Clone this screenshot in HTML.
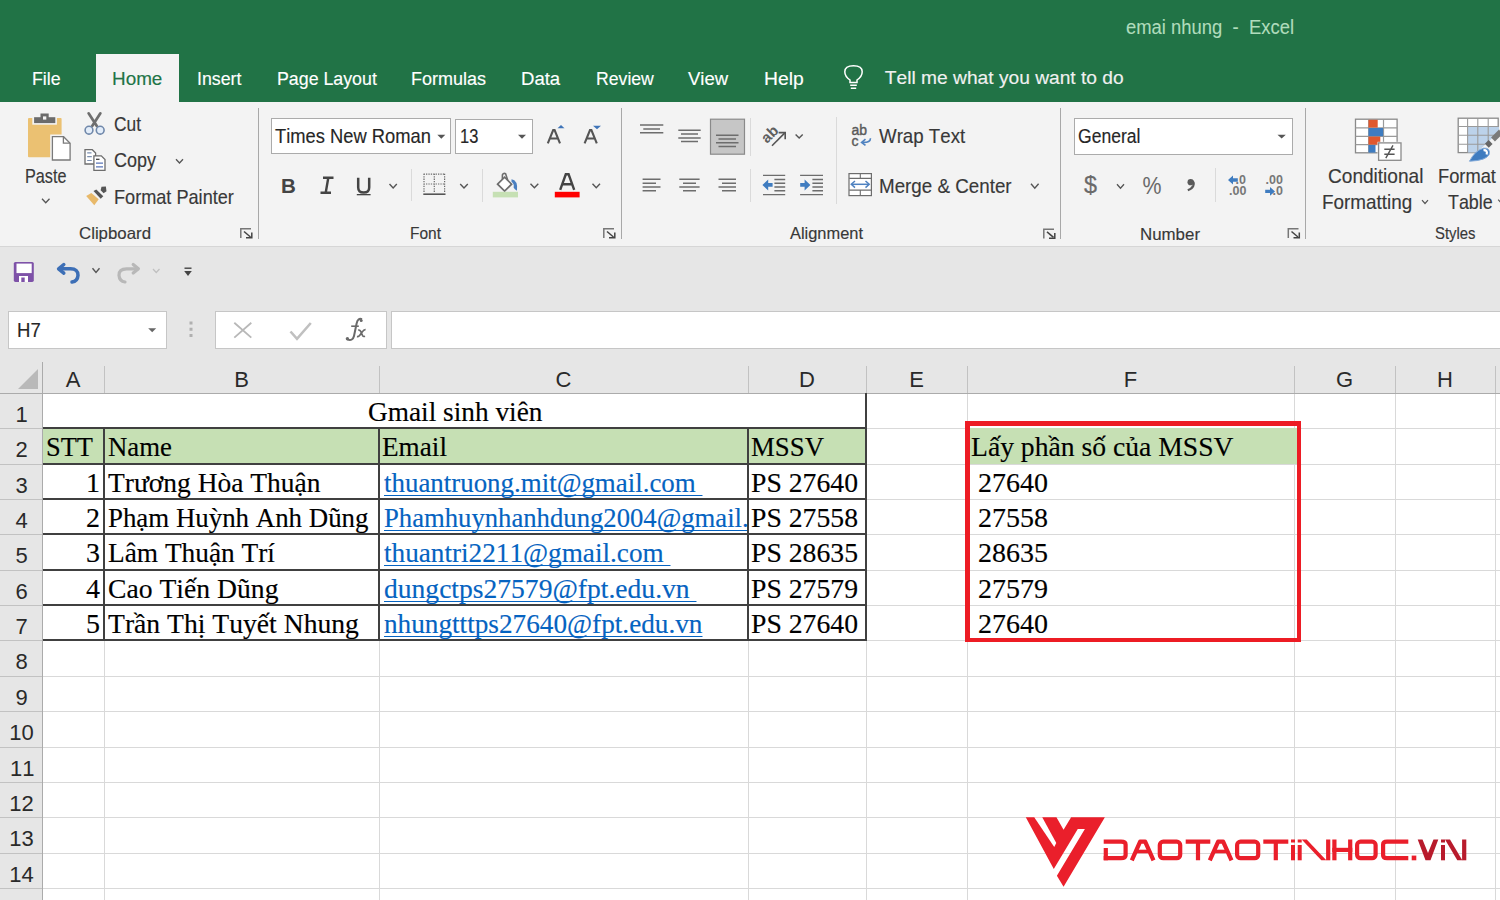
<!DOCTYPE html><html><head><meta charset="utf-8"><style>
html,body{margin:0;padding:0;width:1500px;height:900px;overflow:hidden;background:#fff}
.r{position:absolute;display:block}
.t{position:absolute;white-space:pre;font-kerning:none}
</style></head><body>
<div class="r" style="left:0px;top:0px;width:1500px;height:102px;background:#217346"></div>
<div class="t" style="left:1126.00px;top:17.89px;font-size:19.5px;line-height:19.5px;font-family:'Liberation Sans', sans-serif;color:#b0dcbc;-webkit-text-stroke:0.15px #b0dcbc;transform:scaleX(0.9451);transform-origin:0 0;-webkit-text-stroke:0.1px #b0dcbc">emai nhung  -  Excel</div>
<div class="r" style="left:96px;top:54px;width:83px;height:48px;background:#f3f3f3"></div>
<div class="t" style="left:31.60px;top:68.75px;font-size:19.2px;line-height:19.2px;font-family:'Liberation Sans', sans-serif;color:#ffffff;-webkit-text-stroke:0.15px #ffffff;transform:scaleX(0.9244);transform-origin:0 0;">File</div>
<div class="t" style="left:196.90px;top:68.75px;font-size:19.2px;line-height:19.2px;font-family:'Liberation Sans', sans-serif;color:#ffffff;-webkit-text-stroke:0.15px #ffffff;transform:scaleX(0.9267);transform-origin:0 0;">Insert</div>
<div class="t" style="left:276.70px;top:68.75px;font-size:19.2px;line-height:19.2px;font-family:'Liberation Sans', sans-serif;color:#ffffff;-webkit-text-stroke:0.15px #ffffff;transform:scaleX(0.9265);transform-origin:0 0;">Page Layout</div>
<div class="t" style="left:411.20px;top:68.75px;font-size:19.2px;line-height:19.2px;font-family:'Liberation Sans', sans-serif;color:#ffffff;-webkit-text-stroke:0.15px #ffffff;transform:scaleX(0.9373);transform-origin:0 0;">Formulas</div>
<div class="t" style="left:521.00px;top:68.75px;font-size:19.2px;line-height:19.2px;font-family:'Liberation Sans', sans-serif;color:#ffffff;-webkit-text-stroke:0.15px #ffffff;transform:scaleX(0.9666);transform-origin:0 0;">Data</div>
<div class="t" style="left:595.50px;top:68.75px;font-size:19.2px;line-height:19.2px;font-family:'Liberation Sans', sans-serif;color:#ffffff;-webkit-text-stroke:0.15px #ffffff;transform:scaleX(0.9197);transform-origin:0 0;">Review</div>
<div class="t" style="left:688.40px;top:68.75px;font-size:19.2px;line-height:19.2px;font-family:'Liberation Sans', sans-serif;color:#ffffff;-webkit-text-stroke:0.15px #ffffff;transform:scaleX(0.9644);transform-origin:0 0;">View</div>
<div class="t" style="left:763.50px;top:68.75px;font-size:19.2px;line-height:19.2px;font-family:'Liberation Sans', sans-serif;color:#ffffff;-webkit-text-stroke:0.15px #ffffff;transform:scaleX(1.0054);transform-origin:0 0;">Help</div>
<div class="t" style="left:111.50px;top:68.75px;font-size:19.2px;line-height:19.2px;font-family:'Liberation Sans', sans-serif;color:#217346;-webkit-text-stroke:0.15px #217346;transform:scaleX(0.9841);transform-origin:0 0;">Home</div>
<div class="t" style="left:884.80px;top:68.35px;font-size:19.2px;line-height:19.2px;font-family:'Liberation Sans', sans-serif;color:#f0f0f0;-webkit-text-stroke:0.15px #f0f0f0;">Tell me what you want to do</div>
<div class="r" style="left:0px;top:102px;width:1500px;height:144px;background:#f3f3f3"></div>
<div class="r" style="left:0px;top:246px;width:1500px;height:1px;background:#d6d6d6"></div>
<div class="r" style="left:0px;top:247px;width:1500px;height:115px;background:#e6e6e6"></div>
<div class="t" style="left:114.20px;top:114.54px;font-size:19.8px;line-height:19.8px;font-family:'Liberation Sans', sans-serif;color:#383838;-webkit-text-stroke:0.15px #383838;transform:scaleX(0.8763);transform-origin:0 0;">Cut</div>
<div class="t" style="left:114.20px;top:151.14px;font-size:19.8px;line-height:19.8px;font-family:'Liberation Sans', sans-serif;color:#383838;-webkit-text-stroke:0.15px #383838;transform:scaleX(0.9086);transform-origin:0 0;">Copy</div>
<div class="t" style="left:114.20px;top:187.84px;font-size:19.8px;line-height:19.8px;font-family:'Liberation Sans', sans-serif;color:#383838;-webkit-text-stroke:0.15px #383838;transform:scaleX(0.9164);transform-origin:0 0;">Format Painter</div>
<div class="t" style="left:24.70px;top:167.04px;font-size:19.8px;line-height:19.8px;font-family:'Liberation Sans', sans-serif;color:#383838;-webkit-text-stroke:0.15px #383838;transform:scaleX(0.8196);transform-origin:0 0;">Paste</div>
<div class="t" style="left:79.00px;top:225.33px;font-size:16.5px;line-height:16.5px;font-family:'Liberation Sans', sans-serif;color:#383838;-webkit-text-stroke:0.15px #383838;transform:scaleX(1.0195);transform-origin:0 0;">Clipboard</div>
<div class="t" style="left:410.00px;top:225.33px;font-size:16.5px;line-height:16.5px;font-family:'Liberation Sans', sans-serif;color:#383838;-webkit-text-stroke:0.15px #383838;transform:scaleX(0.9389);transform-origin:0 0;">Font</div>
<div class="t" style="left:790.00px;top:225.33px;font-size:16.5px;line-height:16.5px;font-family:'Liberation Sans', sans-serif;color:#383838;-webkit-text-stroke:0.15px #383838;transform:scaleX(0.9949);transform-origin:0 0;">Alignment</div>
<div class="t" style="left:1140.00px;top:225.63px;font-size:16.5px;line-height:16.5px;font-family:'Liberation Sans', sans-serif;color:#383838;-webkit-text-stroke:0.15px #383838;transform:scaleX(1.0224);transform-origin:0 0;">Number</div>
<div class="t" style="left:1435.00px;top:225.33px;font-size:16.5px;line-height:16.5px;font-family:'Liberation Sans', sans-serif;color:#383838;-webkit-text-stroke:0.15px #383838;transform:scaleX(0.9014);transform-origin:0 0;">Styles</div>
<div class="t" style="left:879.30px;top:127.44px;font-size:19.8px;line-height:19.8px;font-family:'Liberation Sans', sans-serif;color:#383838;-webkit-text-stroke:0.15px #383838;transform:scaleX(0.9445);transform-origin:0 0;">Wrap Text</div>
<div class="t" style="left:879.30px;top:176.74px;font-size:19.8px;line-height:19.8px;font-family:'Liberation Sans', sans-serif;color:#383838;-webkit-text-stroke:0.15px #383838;transform:scaleX(0.9495);transform-origin:0 0;">Merge &amp; Center</div>
<div class="t" style="left:1327.70px;top:167.44px;font-size:19.8px;line-height:19.8px;font-family:'Liberation Sans', sans-serif;color:#383838;-webkit-text-stroke:0.15px #383838;transform:scaleX(0.9640);transform-origin:0 0;">Conditional</div>
<div class="t" style="left:1321.70px;top:192.84px;font-size:19.8px;line-height:19.8px;font-family:'Liberation Sans', sans-serif;color:#383838;-webkit-text-stroke:0.15px #383838;transform:scaleX(0.9542);transform-origin:0 0;">Formatting</div>
<div class="t" style="left:1437.70px;top:167.44px;font-size:19.8px;line-height:19.8px;font-family:'Liberation Sans', sans-serif;color:#383838;-webkit-text-stroke:0.15px #383838;transform:scaleX(0.9249);transform-origin:0 0;">Format</div>
<div class="t" style="left:1448.20px;top:192.84px;font-size:19.8px;line-height:19.8px;font-family:'Liberation Sans', sans-serif;color:#383838;-webkit-text-stroke:0.15px #383838;transform:scaleX(0.9042);transform-origin:0 0;">Table</div>
<div class="r" style="left:258px;top:108px;width:1px;height:131px;background:#a8a8a8"></div>
<div class="r" style="left:621px;top:108px;width:1px;height:131px;background:#a8a8a8"></div>
<div class="r" style="left:1060px;top:108px;width:1px;height:131px;background:#a8a8a8"></div>
<div class="r" style="left:1305px;top:108px;width:1px;height:131px;background:#a8a8a8"></div>
<div class="r" style="left:411px;top:169px;width:1px;height:32px;background:#dadada"></div>
<div class="r" style="left:482px;top:169px;width:1px;height:33px;background:#dadada"></div>
<div class="r" style="left:750px;top:118px;width:1px;height:38px;background:#dadada"></div>
<div class="r" style="left:750px;top:169px;width:1px;height:33px;background:#dadada"></div>
<div class="r" style="left:836px;top:117px;width:1px;height:87px;background:#dadada"></div>
<div class="r" style="left:1215px;top:168px;width:1px;height:34px;background:#dadada"></div>
<div class="r" style="left:271px;top:118px;width:180px;height:36px;background:#fff;border:1px solid #ababab;box-sizing:border-box"></div>
<div class="r" style="left:455px;top:119px;width:78px;height:35px;background:#fff;border:1px solid #ababab;box-sizing:border-box"></div>
<div class="r" style="left:1074px;top:118px;width:219px;height:37px;background:#fff;border:1px solid #ababab;box-sizing:border-box"></div>
<div class="t" style="left:275.20px;top:127.44px;font-size:19.8px;line-height:19.8px;font-family:'Liberation Sans', sans-serif;color:#262626;-webkit-text-stroke:0.15px #262626;transform:scaleX(0.9272);transform-origin:0 0;">Times New Roman</div>
<div class="t" style="left:460.00px;top:127.44px;font-size:19.8px;line-height:19.8px;font-family:'Liberation Sans', sans-serif;color:#262626;-webkit-text-stroke:0.15px #262626;transform:scaleX(0.8309);transform-origin:0 0;">13</div>
<div class="t" style="left:1078.30px;top:127.48px;font-size:19.4px;line-height:19.4px;font-family:'Liberation Sans', sans-serif;color:#262626;-webkit-text-stroke:0.15px #262626;transform:scaleX(0.9056);transform-origin:0 0;">General</div>
<div class="r" style="left:8px;top:311px;width:159px;height:38px;background:#fff;border:1px solid #c6c6c6;box-sizing:border-box"></div>
<div class="t" style="left:17.00px;top:321.44px;font-size:19.8px;line-height:19.8px;font-family:'Liberation Sans', sans-serif;color:#262626;-webkit-text-stroke:0.15px #262626;transform:scaleX(0.9364);transform-origin:0 0;">H7</div>
<div class="r" style="left:215px;top:311px;width:172px;height:38px;background:#fff;border:1px solid #c6c6c6;box-sizing:border-box"></div>
<div class="r" style="left:391px;top:311px;width:1120px;height:38px;background:#fff;border:1px solid #c6c6c6;box-sizing:border-box"></div>
<div class="r" style="left:0px;top:362px;width:1500px;height:32px;background:#e6e6e6"></div>
<div class="r" style="left:0px;top:393px;width:42px;height:507px;background:#e6e6e6"></div>
<div class="r" style="left:42px;top:393px;width:1458px;height:507px;background:#fff"></div>
<div class="r" style="left:0px;top:393px;width:1500px;height:1px;background:#ababab"></div>
<div class="r" style="left:42px;top:362px;width:1px;height:538px;background:#ababab"></div>
<div class="r" style="left:104px;top:366px;width:1px;height:27px;background:#c2c2c2"></div>
<div class="r" style="left:379px;top:366px;width:1px;height:27px;background:#c2c2c2"></div>
<div class="r" style="left:748px;top:366px;width:1px;height:27px;background:#c2c2c2"></div>
<div class="r" style="left:866px;top:366px;width:1px;height:27px;background:#c2c2c2"></div>
<div class="r" style="left:967px;top:366px;width:1px;height:27px;background:#c2c2c2"></div>
<div class="r" style="left:1294px;top:366px;width:1px;height:27px;background:#c2c2c2"></div>
<div class="r" style="left:1395px;top:366px;width:1px;height:27px;background:#c2c2c2"></div>
<div class="r" style="left:1495px;top:366px;width:1px;height:27px;background:#c2c2c2"></div>
<div class="t" style="left:65.66px;top:368.68px;font-size:22px;line-height:22px;font-family:'Liberation Sans', sans-serif;color:#2a2a2a;-webkit-text-stroke:0.15px #2a2a2a;-webkit-text-stroke:0">A</div>
<div class="t" style="left:234.16px;top:368.68px;font-size:22px;line-height:22px;font-family:'Liberation Sans', sans-serif;color:#2a2a2a;-webkit-text-stroke:0.15px #2a2a2a;-webkit-text-stroke:0">B</div>
<div class="t" style="left:555.56px;top:368.68px;font-size:22px;line-height:22px;font-family:'Liberation Sans', sans-serif;color:#2a2a2a;-webkit-text-stroke:0.15px #2a2a2a;-webkit-text-stroke:0">C</div>
<div class="t" style="left:799.06px;top:368.68px;font-size:22px;line-height:22px;font-family:'Liberation Sans', sans-serif;color:#2a2a2a;-webkit-text-stroke:0.15px #2a2a2a;-webkit-text-stroke:0">D</div>
<div class="t" style="left:909.16px;top:368.68px;font-size:22px;line-height:22px;font-family:'Liberation Sans', sans-serif;color:#2a2a2a;-webkit-text-stroke:0.15px #2a2a2a;-webkit-text-stroke:0">E</div>
<div class="t" style="left:1123.78px;top:368.68px;font-size:22px;line-height:22px;font-family:'Liberation Sans', sans-serif;color:#2a2a2a;-webkit-text-stroke:0.15px #2a2a2a;-webkit-text-stroke:0">F</div>
<div class="t" style="left:1335.94px;top:368.68px;font-size:22px;line-height:22px;font-family:'Liberation Sans', sans-serif;color:#2a2a2a;-webkit-text-stroke:0.15px #2a2a2a;-webkit-text-stroke:0">G</div>
<div class="t" style="left:1437.06px;top:368.68px;font-size:22px;line-height:22px;font-family:'Liberation Sans', sans-serif;color:#2a2a2a;-webkit-text-stroke:0.15px #2a2a2a;-webkit-text-stroke:0">H</div>
<div class="t" style="left:15.38px;top:404.28px;font-size:22px;line-height:22px;font-family:'Liberation Sans', sans-serif;color:#2a2a2a;-webkit-text-stroke:0.15px #2a2a2a;-webkit-text-stroke:0">1</div>
<div class="r" style="left:0px;top:428px;width:42px;height:1px;background:#c2c2c2"></div>
<div class="t" style="left:15.38px;top:439.28px;font-size:22px;line-height:22px;font-family:'Liberation Sans', sans-serif;color:#2a2a2a;-webkit-text-stroke:0.15px #2a2a2a;-webkit-text-stroke:0">2</div>
<div class="r" style="left:0px;top:464px;width:42px;height:1px;background:#c2c2c2"></div>
<div class="t" style="left:15.38px;top:475.28px;font-size:22px;line-height:22px;font-family:'Liberation Sans', sans-serif;color:#2a2a2a;-webkit-text-stroke:0.15px #2a2a2a;-webkit-text-stroke:0">3</div>
<div class="r" style="left:0px;top:499px;width:42px;height:1px;background:#c2c2c2"></div>
<div class="t" style="left:15.38px;top:510.28px;font-size:22px;line-height:22px;font-family:'Liberation Sans', sans-serif;color:#2a2a2a;-webkit-text-stroke:0.15px #2a2a2a;-webkit-text-stroke:0">4</div>
<div class="r" style="left:0px;top:534px;width:42px;height:1px;background:#c2c2c2"></div>
<div class="t" style="left:15.38px;top:545.28px;font-size:22px;line-height:22px;font-family:'Liberation Sans', sans-serif;color:#2a2a2a;-webkit-text-stroke:0.15px #2a2a2a;-webkit-text-stroke:0">5</div>
<div class="r" style="left:0px;top:570px;width:42px;height:1px;background:#c2c2c2"></div>
<div class="t" style="left:15.38px;top:581.28px;font-size:22px;line-height:22px;font-family:'Liberation Sans', sans-serif;color:#2a2a2a;-webkit-text-stroke:0.15px #2a2a2a;-webkit-text-stroke:0">6</div>
<div class="r" style="left:0px;top:605px;width:42px;height:1px;background:#c2c2c2"></div>
<div class="t" style="left:15.38px;top:616.28px;font-size:22px;line-height:22px;font-family:'Liberation Sans', sans-serif;color:#2a2a2a;-webkit-text-stroke:0.15px #2a2a2a;-webkit-text-stroke:0">7</div>
<div class="r" style="left:0px;top:640px;width:42px;height:1px;background:#c2c2c2"></div>
<div class="t" style="left:15.38px;top:651.28px;font-size:22px;line-height:22px;font-family:'Liberation Sans', sans-serif;color:#2a2a2a;-webkit-text-stroke:0.15px #2a2a2a;-webkit-text-stroke:0">8</div>
<div class="r" style="left:0px;top:676px;width:42px;height:1px;background:#c2c2c2"></div>
<div class="t" style="left:15.38px;top:687.28px;font-size:22px;line-height:22px;font-family:'Liberation Sans', sans-serif;color:#2a2a2a;-webkit-text-stroke:0.15px #2a2a2a;-webkit-text-stroke:0">9</div>
<div class="r" style="left:0px;top:711px;width:42px;height:1px;background:#c2c2c2"></div>
<div class="t" style="left:9.26px;top:722.28px;font-size:22px;line-height:22px;font-family:'Liberation Sans', sans-serif;color:#2a2a2a;-webkit-text-stroke:0.15px #2a2a2a;-webkit-text-stroke:0">10</div>
<div class="r" style="left:0px;top:747px;width:42px;height:1px;background:#c2c2c2"></div>
<div class="t" style="left:10.08px;top:758.28px;font-size:22px;line-height:22px;font-family:'Liberation Sans', sans-serif;color:#2a2a2a;-webkit-text-stroke:0.15px #2a2a2a;-webkit-text-stroke:0">11</div>
<div class="r" style="left:0px;top:782px;width:42px;height:1px;background:#c2c2c2"></div>
<div class="t" style="left:9.26px;top:793.28px;font-size:22px;line-height:22px;font-family:'Liberation Sans', sans-serif;color:#2a2a2a;-webkit-text-stroke:0.15px #2a2a2a;-webkit-text-stroke:0">12</div>
<div class="r" style="left:0px;top:817px;width:42px;height:1px;background:#c2c2c2"></div>
<div class="t" style="left:9.26px;top:828.28px;font-size:22px;line-height:22px;font-family:'Liberation Sans', sans-serif;color:#2a2a2a;-webkit-text-stroke:0.15px #2a2a2a;-webkit-text-stroke:0">13</div>
<div class="r" style="left:0px;top:853px;width:42px;height:1px;background:#c2c2c2"></div>
<div class="t" style="left:9.26px;top:864.28px;font-size:22px;line-height:22px;font-family:'Liberation Sans', sans-serif;color:#2a2a2a;-webkit-text-stroke:0.15px #2a2a2a;-webkit-text-stroke:0">14</div>
<div class="r" style="left:0px;top:888px;width:42px;height:1px;background:#c2c2c2"></div>
<div class="r" style="left:104px;top:428px;width:1px;height:472px;background:#d9d9d9"></div>
<div class="r" style="left:379px;top:428px;width:1px;height:472px;background:#d9d9d9"></div>
<div class="r" style="left:748px;top:428px;width:1px;height:472px;background:#d9d9d9"></div>
<div class="r" style="left:866px;top:394px;width:1px;height:506px;background:#d9d9d9"></div>
<div class="r" style="left:967px;top:394px;width:1px;height:506px;background:#d9d9d9"></div>
<div class="r" style="left:1294px;top:394px;width:1px;height:506px;background:#d9d9d9"></div>
<div class="r" style="left:1395px;top:394px;width:1px;height:506px;background:#d9d9d9"></div>
<div class="r" style="left:1495px;top:394px;width:1px;height:506px;background:#d9d9d9"></div>
<div class="r" style="left:43px;top:428px;width:1457px;height:1px;background:#d9d9d9"></div>
<div class="r" style="left:43px;top:464px;width:1457px;height:1px;background:#d9d9d9"></div>
<div class="r" style="left:43px;top:499px;width:1457px;height:1px;background:#d9d9d9"></div>
<div class="r" style="left:43px;top:534px;width:1457px;height:1px;background:#d9d9d9"></div>
<div class="r" style="left:43px;top:570px;width:1457px;height:1px;background:#d9d9d9"></div>
<div class="r" style="left:43px;top:605px;width:1457px;height:1px;background:#d9d9d9"></div>
<div class="r" style="left:43px;top:640px;width:1457px;height:1px;background:#d9d9d9"></div>
<div class="r" style="left:43px;top:676px;width:1457px;height:1px;background:#d9d9d9"></div>
<div class="r" style="left:43px;top:711px;width:1457px;height:1px;background:#d9d9d9"></div>
<div class="r" style="left:43px;top:747px;width:1457px;height:1px;background:#d9d9d9"></div>
<div class="r" style="left:43px;top:782px;width:1457px;height:1px;background:#d9d9d9"></div>
<div class="r" style="left:43px;top:817px;width:1457px;height:1px;background:#d9d9d9"></div>
<div class="r" style="left:43px;top:853px;width:1457px;height:1px;background:#d9d9d9"></div>
<div class="r" style="left:43px;top:888px;width:1457px;height:1px;background:#d9d9d9"></div>
<div class="r" style="left:43px;top:429px;width:823px;height:35px;background:#c6e0b4"></div>
<div class="r" style="left:970px;top:428px;width:327px;height:36px;background:#c6e0b4"></div>
<div class="r" style="left:43px;top:427px;width:824px;height:2px;background:#404040"></div>
<div class="r" style="left:43px;top:463px;width:824px;height:2px;background:#404040"></div>
<div class="r" style="left:43px;top:498px;width:824px;height:2px;background:#404040"></div>
<div class="r" style="left:43px;top:533px;width:824px;height:2px;background:#404040"></div>
<div class="r" style="left:43px;top:569px;width:824px;height:2px;background:#404040"></div>
<div class="r" style="left:43px;top:604px;width:824px;height:2px;background:#404040"></div>
<div class="r" style="left:43px;top:639px;width:824px;height:2px;background:#404040"></div>
<div class="r" style="left:103px;top:428px;width:2px;height:213px;background:#404040"></div>
<div class="r" style="left:378px;top:428px;width:2px;height:213px;background:#404040"></div>
<div class="r" style="left:747px;top:428px;width:2px;height:213px;background:#404040"></div>
<div class="r" style="left:865px;top:393px;width:2px;height:248px;background:#404040"></div>
<div class="t" style="left:368.05px;top:398.32px;font-size:27.8px;line-height:27.8px;font-family:'Liberation Serif', serif;color:#000000;transform:scaleX(0.9826);transform-origin:0 0;-webkit-text-stroke:0.15px #000000;">Gmail sinh viên</div>
<div class="t" style="left:46.00px;top:433.32px;font-size:27.8px;line-height:27.8px;font-family:'Liberation Serif', serif;color:#000000;transform:scaleX(0.9510);transform-origin:0 0;-webkit-text-stroke:0.15px #000000;">STT</div>
<div class="t" style="left:108.00px;top:433.32px;font-size:27.8px;line-height:27.8px;font-family:'Liberation Serif', serif;color:#000000;transform:scaleX(0.9642);transform-origin:0 0;-webkit-text-stroke:0.15px #000000;">Name</div>
<div class="t" style="left:382.00px;top:433.32px;font-size:27.8px;line-height:27.8px;font-family:'Liberation Serif', serif;color:#000000;transform:scaleX(0.9790);transform-origin:0 0;-webkit-text-stroke:0.15px #000000;">Email</div>
<div class="t" style="left:751.00px;top:433.32px;font-size:27.8px;line-height:27.8px;font-family:'Liberation Serif', serif;color:#000000;transform:scaleX(0.9641);transform-origin:0 0;-webkit-text-stroke:0.15px #000000;">MSSV</div>
<div class="t" style="left:85.50px;top:469.32px;font-size:27.8px;line-height:27.8px;font-family:'Liberation Serif', serif;color:#000000;transform:scaleX(1.0072);transform-origin:0 0;-webkit-text-stroke:0.15px #000000;">1</div>
<div class="t" style="left:108.00px;top:469.32px;font-size:27.8px;line-height:27.8px;font-family:'Liberation Serif', serif;color:#000000;transform:scaleX(0.9880);transform-origin:0 0;-webkit-text-stroke:0.15px #000000;">Trương Hòa Thuận</div>
<div class="t" style="left:751.00px;top:469.32px;font-size:27.8px;line-height:27.8px;font-family:'Liberation Serif', serif;color:#000000;transform:scaleX(0.9965);transform-origin:0 0;-webkit-text-stroke:0.15px #000000;">PS 27640</div>
<div class="t" style="left:971.00px;top:469.32px;font-size:27.8px;line-height:27.8px;font-family:'Liberation Serif', serif;color:#000000;transform:scaleX(1.0072);transform-origin:0 0;-webkit-text-stroke:0.15px #000000;"> 27640</div>
<div class="t" style="left:85.50px;top:504.32px;font-size:27.8px;line-height:27.8px;font-family:'Liberation Serif', serif;color:#000000;transform:scaleX(1.0072);transform-origin:0 0;-webkit-text-stroke:0.15px #000000;">2</div>
<div class="t" style="left:108.00px;top:504.32px;font-size:27.8px;line-height:27.8px;font-family:'Liberation Serif', serif;color:#000000;transform:scaleX(0.9665);transform-origin:0 0;-webkit-text-stroke:0.15px #000000;">Phạm Huỳnh Anh Dũng</div>
<div class="t" style="left:751.00px;top:504.32px;font-size:27.8px;line-height:27.8px;font-family:'Liberation Serif', serif;color:#000000;transform:scaleX(0.9965);transform-origin:0 0;-webkit-text-stroke:0.15px #000000;">PS 27558</div>
<div class="t" style="left:971.00px;top:504.32px;font-size:27.8px;line-height:27.8px;font-family:'Liberation Serif', serif;color:#000000;transform:scaleX(1.0072);transform-origin:0 0;-webkit-text-stroke:0.15px #000000;"> 27558</div>
<div class="t" style="left:85.50px;top:539.32px;font-size:27.8px;line-height:27.8px;font-family:'Liberation Serif', serif;color:#000000;transform:scaleX(1.0072);transform-origin:0 0;-webkit-text-stroke:0.15px #000000;">3</div>
<div class="t" style="left:108.00px;top:539.32px;font-size:27.8px;line-height:27.8px;font-family:'Liberation Serif', serif;color:#000000;transform:scaleX(0.9830);transform-origin:0 0;-webkit-text-stroke:0.15px #000000;">Lâm Thuận Trí</div>
<div class="t" style="left:751.00px;top:539.32px;font-size:27.8px;line-height:27.8px;font-family:'Liberation Serif', serif;color:#000000;transform:scaleX(0.9965);transform-origin:0 0;-webkit-text-stroke:0.15px #000000;">PS 28635</div>
<div class="t" style="left:971.00px;top:539.32px;font-size:27.8px;line-height:27.8px;font-family:'Liberation Serif', serif;color:#000000;transform:scaleX(1.0072);transform-origin:0 0;-webkit-text-stroke:0.15px #000000;"> 28635</div>
<div class="t" style="left:85.50px;top:575.32px;font-size:27.8px;line-height:27.8px;font-family:'Liberation Serif', serif;color:#000000;transform:scaleX(1.0072);transform-origin:0 0;-webkit-text-stroke:0.15px #000000;">4</div>
<div class="t" style="left:108.00px;top:575.32px;font-size:27.8px;line-height:27.8px;font-family:'Liberation Serif', serif;color:#000000;transform:scaleX(0.9946);transform-origin:0 0;-webkit-text-stroke:0.15px #000000;">Cao Tiến Dũng</div>
<div class="t" style="left:751.00px;top:575.32px;font-size:27.8px;line-height:27.8px;font-family:'Liberation Serif', serif;color:#000000;transform:scaleX(0.9965);transform-origin:0 0;-webkit-text-stroke:0.15px #000000;">PS 27579</div>
<div class="t" style="left:971.00px;top:575.32px;font-size:27.8px;line-height:27.8px;font-family:'Liberation Serif', serif;color:#000000;transform:scaleX(1.0072);transform-origin:0 0;-webkit-text-stroke:0.15px #000000;"> 27579</div>
<div class="t" style="left:85.50px;top:610.32px;font-size:27.8px;line-height:27.8px;font-family:'Liberation Serif', serif;color:#000000;transform:scaleX(1.0072);transform-origin:0 0;-webkit-text-stroke:0.15px #000000;">5</div>
<div class="t" style="left:108.00px;top:610.32px;font-size:27.8px;line-height:27.8px;font-family:'Liberation Serif', serif;color:#000000;transform:scaleX(0.9940);transform-origin:0 0;-webkit-text-stroke:0.15px #000000;">Trần Thị Tuyết Nhung</div>
<div class="t" style="left:751.00px;top:610.32px;font-size:27.8px;line-height:27.8px;font-family:'Liberation Serif', serif;color:#000000;transform:scaleX(0.9965);transform-origin:0 0;-webkit-text-stroke:0.15px #000000;">PS 27640</div>
<div class="t" style="left:971.00px;top:610.32px;font-size:27.8px;line-height:27.8px;font-family:'Liberation Serif', serif;color:#000000;transform:scaleX(1.0072);transform-origin:0 0;-webkit-text-stroke:0.15px #000000;"> 27640</div>
<div class="r" style="left:380px;top:464px;width:367px;height:176px;overflow:hidden">
<div class="t" style="left:3.60px;top:5.32px;font-size:27.8px;line-height:27.8px;font-family:'Liberation Serif', serif;color:#0563c1;transform:scaleX(0.9680);transform-origin:0 0;-webkit-text-stroke:0.15px #0563c1;text-decoration:underline;text-decoration-thickness:1px;text-underline-offset:2.5px;text-decoration-skip-ink:none">thuantruong.mit@gmail.com </div>
<div class="t" style="left:3.60px;top:40.32px;font-size:27.8px;line-height:27.8px;font-family:'Liberation Serif', serif;color:#0563c1;transform:scaleX(0.9596);transform-origin:0 0;-webkit-text-stroke:0.15px #0563c1;text-decoration:underline;text-decoration-thickness:1px;text-underline-offset:2.5px;text-decoration-skip-ink:none">Phamhuynhanhdung2004@gmail.com</div>
<div class="t" style="left:3.60px;top:75.32px;font-size:27.8px;line-height:27.8px;font-family:'Liberation Serif', serif;color:#0563c1;transform:scaleX(0.9787);transform-origin:0 0;-webkit-text-stroke:0.15px #0563c1;text-decoration:underline;text-decoration-thickness:1px;text-underline-offset:2.5px;text-decoration-skip-ink:none">thuantri2211@gmail.com </div>
<div class="t" style="left:3.60px;top:111.32px;font-size:27.8px;line-height:27.8px;font-family:'Liberation Serif', serif;color:#0563c1;transform:scaleX(0.9916);transform-origin:0 0;-webkit-text-stroke:0.15px #0563c1;text-decoration:underline;text-decoration-thickness:1px;text-underline-offset:2.5px;text-decoration-skip-ink:none">dungctps27579@fpt.edu.vn </div>
<div class="t" style="left:3.60px;top:146.32px;font-size:27.8px;line-height:27.8px;font-family:'Liberation Serif', serif;color:#0563c1;transform:scaleX(0.9794);transform-origin:0 0;-webkit-text-stroke:0.15px #0563c1;text-decoration:underline;text-decoration-thickness:1px;text-underline-offset:2.5px;text-decoration-skip-ink:none">nhungtttps27640@fpt.edu.vn</div>
</div>
<div class="t" style="left:971.00px;top:433.32px;font-size:27.8px;line-height:27.8px;font-family:'Liberation Serif', serif;color:#000000;transform:scaleX(0.9940);transform-origin:0 0;-webkit-text-stroke:0.15px #000000;">Lấy phần số của MSSV</div>
<div class="r" style="left:965px;top:421px;width:336px;height:221px;border:solid #ed1c24;border-width:5px 4px 4px 5px;box-sizing:border-box"></div>
<svg class="r" style="left:0;top:0" width="1500" height="900" viewBox="0 0 1500 900"><rect x="28" y="118" width="33.6" height="39.2" rx="1" fill="#ebc172"/><rect x="32.3" y="115.7" width="24.6" height="9" fill="#f3f3f3"/><rect x="34.1" y="117.2" width="21.2" height="5.9" fill="#6b6b6b"/><rect x="40.5" y="113.5" width="8.2" height="5" fill="#6b6b6b"/><rect x="43" y="116.4" width="3.3" height="3.2" fill="#f3f3f3"/><path d="M50.2 134.5H64.2L72.3 142.4V162.2H50.2Z" fill="#f3f3f3"/><path d="M52.4 136.7H63.6L70.1 143.2V160H52.4Z" fill="#fff" stroke="#7a7a7a" stroke-width="1.3"/><path d="M63.4 136.7V143.2H70.1" fill="none" stroke="#7a7a7a" stroke-width="1.3"/><path d="M42 198.8L45.75 202.8L49.5 198.8" fill="none" stroke="#555" stroke-width="1.3"/><path d="M88.6 113.3L96.8 126M100.4 113.3L92.2 126" stroke="#6e6e6e" stroke-width="2.7" stroke-linecap="round"/><circle cx="89" cy="130.2" r="3.9" fill="#e3edf9" stroke="#7088aa" stroke-width="1.6"/><circle cx="100.2" cy="130.2" r="3.9" fill="#e3edf9" stroke="#7088aa" stroke-width="1.6"/><path d="M85 149.7H92.3L95.6 153V164H85Z" fill="#fff" stroke="#6d6d6d" stroke-width="1.3"/><path d="M87.2 152.8H91.5M87.2 156.7H91.8M87.2 160.5H91.8" stroke="#7b8fb0" stroke-width="1.2"/><path d="M93.9 155.9H101.3L105 159.6V170.4H93.9Z" fill="#fff" stroke="#6d6d6d" stroke-width="1.3"/><path d="M96 159.3H99.5" stroke="#333" stroke-width="1.2"/><path d="M96 163.2H103M96 166.8H103" stroke="#5a75b8" stroke-width="1.3"/><path d="M176 159.2L179.5 163L183 159.2" fill="none" stroke="#555" stroke-width="1.3"/><path d="M86.2 196L91.3 193L98.7 199.3L94.3 205.3Z" fill="#e8b96a"/><path d="M93.5 191L96.3 189.5L103.3 196.3L100.7 198.7Z" fill="#555"/><path d="M101.5 186.8L105.9 186.4L106.5 191.2L103.6 193.2L100.6 190.2Z" fill="#555"/><path d="M240.8 238V228.8H251" fill="none" stroke="#777" stroke-width="1.5"/><path d="M244 231.5L250.5 237" fill="none" stroke="#444" stroke-width="1.5"/><path d="M246 237.8H251.8V232.5" fill="none" stroke="#444" stroke-width="1.5"/><path d="M437.3 134.7L445.3 134.7L441.3 138.7Z" fill="#555"/><path d="M518 134.7L526 134.7L522.0 138.7Z" fill="#555"/><path d="M547.8 143.3L553.2 130H554.6L560 143.3M550 138.5H557.8" fill="none" stroke="#555" stroke-width="2.1"/><path d="M557.5 128.2L561 125L564.5 128.2Z" fill="#3f74b8"/><path d="M584.6 143.3L590 130H591.4L596.8 143.3M586.8 138.5H594.6" fill="none" stroke="#555" stroke-width="2.1"/><path d="M593 125.8L597 129.3L601 125.8Z" fill="#3f74b8"/><text x="281" y="192.8" font-family="Liberation Sans" font-weight="bold" font-size="20.5" fill="#444">B</text><path d="M323 177.8H333.5M320.5 192.8H331M328.3 177.8L325.7 192.8" fill="none" stroke="#444" stroke-width="2.4"/><path d="M358.2 177.8V187.5Q358.2 192.6 363.7 192.6Q369.2 192.6 369.2 187.5V177.8" fill="none" stroke="#444" stroke-width="2.5"/><rect x="356.8" y="194" width="13.8" height="1.3" fill="#444"/><path d="M389.5 184L393.15 188L396.8 184" fill="none" stroke="#555" stroke-width="1.4"/><path d="M424 173.8V193M434.3 173.8V193M444.6 173.8V193M423.6 174.2H445.2M423.6 184H445.2" fill="none" stroke="#6a6a6a" stroke-width="1.2" stroke-dasharray="1.3 1.1"/><rect x="423.3" y="193.4" width="22.2" height="1.6" fill="#555"/><path d="M460.2 184L464.0 188L467.8 184" fill="none" stroke="#555" stroke-width="1.4"/><path d="M497.6 184.2L504.6 177.2L511.6 184.2L504.6 191Z" fill="#fff" stroke="#6d6d6d" stroke-width="1.7"/><path d="M502.4 179V174.8Q503.6 172.6 505.6 173.8L507.8 180.5" fill="none" stroke="#6d6d6d" stroke-width="1.6"/><path d="M511.5 179.2Q518.2 180.2 517 190.8Q514.5 189.5 513.6 187.5Q514.5 184 511.5 181.8Z" fill="#4a7fc0"/><rect x="492.8" y="191.8" width="25.2" height="5.6" fill="#c6e0b4"/><path d="M530.5 183.8L534.4 187.8L538.3 183.8" fill="none" stroke="#555" stroke-width="1.4"/><path d="M560.2 189.8L565.8 174.3H568.6L574.2 189.8M562.2 184.3H572.2" fill="none" stroke="#444" stroke-width="2.4"/><rect x="554.8" y="191.8" width="24.8" height="5.6" fill="#ff0000"/><path d="M592.5 183.8L596.25 187.8L600 183.8" fill="none" stroke="#555" stroke-width="1.4"/><path d="M603.8 238V228.8H614" fill="none" stroke="#777" stroke-width="1.5"/><path d="M607 231.5L613.5 237" fill="none" stroke="#444" stroke-width="1.5"/><path d="M609 237.8H614.8V232.5" fill="none" stroke="#444" stroke-width="1.5"/><path d="M640 125.1H663.3M643.3 128.9H660M640 132.7H663.3" fill="none" stroke="#6d6d6d" stroke-width="1.5"/><path d="M678.3 130.3H700.7M681 134.1H698M678.3 137.9H700.7M681 141.6H698" fill="none" stroke="#6d6d6d" stroke-width="1.5"/><rect x="710.5" y="119.2" width="34" height="35" fill="#c6c6c6" stroke="#8a8a8a" stroke-width="1.2"/><path d="M716 135.2H738.5M718.5 139H736M716 142.8H738.5M718.5 146.6H736" fill="none" stroke="#6d6d6d" stroke-width="1.5"/><path d="M642.6 179.3H660.5M642.6 183.2H656M642.6 187H660.5M642.6 190.8H656" fill="none" stroke="#6d6d6d" stroke-width="1.5"/><path d="M679.3 179.3H699.6M683 183.2H696M679.3 187H699.6M683 190.8H696" fill="none" stroke="#6d6d6d" stroke-width="1.5"/><path d="M718.5 179.3H736M722 183.2H736M718.5 187H736M722 190.8H736" fill="none" stroke="#6d6d6d" stroke-width="1.5"/><text transform="translate(767,144) rotate(-45)" font-family="Liberation Sans" font-weight="bold" font-size="15" fill="#5f5f5f">ab</text><path d="M772 145.7L784.6 133.1" stroke="#555" stroke-width="1.6"/><path d="M778.6 132.6H785.2V139.2" fill="none" stroke="#555" stroke-width="1.6"/><path d="M795.6 134.4L799.1500000000001 138.1L802.7 134.4" fill="none" stroke="#555" stroke-width="1.4"/><path d="M763 175.4H785.2M774.4 179.5H785.2M774.4 183.3H785.2M774.4 187H785.2M774.4 190.8H785.2M763 194.6H785.2" fill="none" stroke="#6d6d6d" stroke-width="1.4"/><path d="M762.4 184.9L768.2 179.4V183H772.6V186.8H768.2V190.4Z" fill="#3f7cc0"/><path d="M800.1 175.4H823M812.4 179.5H823M812.4 183.3H823M812.4 187H823M812.4 190.8H823M800.1 194.6H823" fill="none" stroke="#6d6d6d" stroke-width="1.4"/><path d="M810.4 184.9L804.6 179.4V183H800.2V186.8H804.6V190.4Z" fill="#3f7cc0"/><text x="851.5" y="135.3" font-family="Liberation Sans" font-size="14" fill="#5a5a5a" stroke="#5a5a5a" stroke-width="0.4">ab</text><text x="851.5" y="145.8" font-family="Liberation Sans" font-size="14" fill="#5a5a5a" stroke="#5a5a5a" stroke-width="0.4">c</text><path d="M870.5 138.2Q870.5 142.6 863 142.4" fill="none" stroke="#4f82c0" stroke-width="1.6"/><path d="M865.5 139.2L861.6 142.4L865.5 145.4" fill="none" stroke="#4f82c0" stroke-width="1.6"/><rect x="849" y="173.6" width="22.4" height="22" fill="#fff" stroke="#6d6d6d" stroke-width="1.2"/><path d="M849.2 178.4H871.2M849.2 190.1H871.2M860.3 173.8V178.4M860.3 190.1V195.4" fill="none" stroke="#6d6d6d" stroke-width="1.1"/><path d="M851.5 184.3H869" stroke="#4f82c0" stroke-width="1.5"/><path d="M855 181L851.3 184.3L855 187.6M865.5 181L869.2 184.3L865.5 187.6" fill="none" stroke="#4f82c0" stroke-width="1.5"/><path d="M1031 183.8L1034.8 188.2L1038.6 183.8" fill="none" stroke="#555" stroke-width="1.4"/><path d="M1043.8 238.4V229.20000000000002H1054" fill="none" stroke="#777" stroke-width="1.5"/><path d="M1047 231.9L1053.5 237.4" fill="none" stroke="#444" stroke-width="1.5"/><path d="M1049 238.20000000000002H1054.8V232.9" fill="none" stroke="#444" stroke-width="1.5"/><path d="M1277.5 134.7L1285.8 134.7L1281.65 138.5Z" fill="#555"/><text x="1084" y="192.8" font-family="Liberation Sans" font-size="23" fill="#6a6a6a" stroke="#6a6a6a" stroke-width="0.2" textLength="13" lengthAdjust="spacingAndGlyphs">$</text><path d="M1117 184.2L1120.5 188.2L1124 184.2" fill="none" stroke="#555" stroke-width="1.3"/><text x="1142.6" y="193.7" font-family="Liberation Sans" font-size="23" fill="#6a6a6a" textLength="19" lengthAdjust="spacingAndGlyphs">%</text><path d="M1191.5 180.5Q1194.8 182 1193.2 186Q1192 188.6 1187.8 190.2" fill="none" stroke="#5a5a5a" stroke-width="2.2"/><circle cx="1190.6" cy="182.2" r="3.1" fill="#5a5a5a"/><path d="M1228 180L1233 175.6V178.3H1237.8V181.7H1233V184.4Z" fill="#3f7cc0"/><text x="1235.5" y="184" font-family="Liberation Sans" font-weight="bold" font-size="12.5" fill="#777">.0</text><text x="1229" y="195" font-family="Liberation Sans" font-weight="bold" font-size="12.5" fill="#777">.00</text><text x="1265.5" y="184" font-family="Liberation Sans" font-weight="bold" font-size="12.5" fill="#777">.00</text><path d="M1275 191.4L1270 187V189.7H1265.2V193.1H1270V195.8Z" fill="#3f7cc0"/><text x="1272.5" y="195" font-family="Liberation Sans" font-weight="bold" font-size="12.5" fill="#777">.0</text><path d="M1288.3 238V228.8H1298.5" fill="none" stroke="#777" stroke-width="1.5"/><path d="M1291.5 231.5L1298.0 237" fill="none" stroke="#444" stroke-width="1.5"/><path d="M1293.5 237.8H1299.3V232.5" fill="none" stroke="#444" stroke-width="1.5"/><rect x="1355.5" y="119.2" width="41.6" height="33.6" fill="#fff" stroke="#8a8a8a" stroke-width="1.3"/><path d="M1355.5 127.8H1397M1355.5 136.3H1397M1355.5 144.6H1397M1368.7 119.2V152.8M1383.5 119.2V152.8" fill="none" stroke="#9a9a9a" stroke-width="1.2"/><rect x="1368.5" y="119.8" width="9.2" height="7.8" fill="#e0582e"/><rect x="1368.5" y="128" width="14.6" height="8.2" fill="#3f7cc0"/><rect x="1368.5" y="136.6" width="11.8" height="8" fill="#e0582e"/><rect x="1368.5" y="145" width="7" height="7.6" fill="#3f7cc0"/><rect x="1377.5" y="141.8" width="24.5" height="19.3" fill="#f3f3f3"/><rect x="1378.6" y="142.9" width="22.4" height="17.4" fill="#fff" stroke="#8a8a8a" stroke-width="1.3"/><path d="M1384.3 149.2H1394.6M1384.3 154.2H1394.6M1385.8 158.2L1393 145.4" fill="none" stroke="#555" stroke-width="1.4"/><path d="M1422 200.2L1425.0 203.5L1428 200.2" fill="none" stroke="#555" stroke-width="1.2"/><rect x="1458.2" y="118.2" width="40" height="34.4" fill="#fff" stroke="#8a8a8a" stroke-width="1.3"/><rect x="1468" y="126.5" width="31" height="26" fill="#bcd2ea"/><path d="M1458.2 126.5H1499M1458.2 135.3H1499M1458.2 144.2H1499M1467.6 118.2V152.6M1477.8 118.2V152.6M1488.2 118.2V152.6" fill="none" stroke="#9a9a9a" stroke-width="1.1"/><path d="M1474 155L1501 130V170H1470Z" fill="#f3f3f3"/><path d="M1501 131.5L1493 139.5" stroke="#7a7a7a" stroke-width="5.5"/><path d="M1490.6 142L1486.8 145.8" stroke="#666" stroke-width="5.5"/><path d="M1469.5 161.2Q1475 150.5 1483.5 148.2Q1490.5 147.5 1489.2 154.2Q1486.5 160.6 1469.5 161.2Z" fill="#3f7cc0" stroke="#7fa8d8" stroke-width="1"/><path d="M1483.5 150.2Q1488 150 1486.6 154.5" fill="none" stroke="#fff" stroke-width="2.2"/><path d="M1498.2 199.6L1501.6 203.2L1505 199.6" fill="none" stroke="#555" stroke-width="1.2"/><rect x="13.8" y="261.9" width="20" height="20" rx="1.6" fill="#7e52a8"/><rect x="16.5" y="263.6" width="15.2" height="9.5" fill="#fff"/><path d="M19 282V276H28V282H24.7V277.6H21.3V282Z" fill="#fff"/><path d="M63.8 264.5L58.6 268.8L63.8 273.1" fill="none" stroke="#3d6fb6" stroke-width="3.5" stroke-linecap="round" stroke-linejoin="round"/><path d="M59.5 268.8H70.5Q78.2 269 78 275.3Q77.6 281.2 72 282" fill="none" stroke="#3d6fb6" stroke-width="3.5" stroke-linecap="round"/><path d="M92.5 268.3L96.0 272.5L99.5 268.3" fill="none" stroke="#555" stroke-width="1.4"/><path d="M133.2 264.5L138.4 268.8L133.2 273.1" fill="none" stroke="#b8b8b8" stroke-width="3.2" stroke-linecap="round" stroke-linejoin="round"/><path d="M137.5 268.8H126.5Q118.8 269 119 275.3Q119.4 281.2 125 282" fill="none" stroke="#b8b8b8" stroke-width="3.2" stroke-linecap="round"/><path d="M153 269L156.25 272.5L159.5 269" fill="none" stroke="#c0c0c0" stroke-width="1.3"/><rect x="184.5" y="267.5" width="7" height="1.4" fill="#444"/><path d="M184.2 271L191.8 271L188.0 276Z" fill="#444"/><path d="M148.2 328.2L156.2 328.2L152.2 332.2Z" fill="#666"/><path d="M189.5 321.5h3v3h-3zM189.5 327.8h3v3h-3zM189.5 334h3v3h-3z" fill="#b0b0b0"/><path d="M234.3 322.8L251.3 337.6M251.3 322.8L234.3 337.6" stroke="#b8b8b8" stroke-width="1.8"/><path d="M290.5 331.5L297 338.8L310.8 323" fill="none" stroke="#c0c0c0" stroke-width="2.6"/><path d="M362 319.2Q357.8 317.6 356.6 323.5L354 336Q352.8 341.2 347.6 339.6" fill="none" stroke="#6a6a6a" stroke-width="2"/><circle cx="361.2" cy="320.6" r="1.5" fill="#6a6a6a"/><circle cx="347.4" cy="338.8" r="1.7" fill="#6a6a6a"/><path d="M351.2 326.2H358.8" stroke="#6a6a6a" stroke-width="1.6"/><path d="M358.2 330.2Q360 329.4 361.2 332.5L362.6 335.6Q363.4 337 365 336.2M365.6 329.6Q364 329.4 361.8 332.4L359.6 335.4Q358.6 337 357 336.4" fill="none" stroke="#6a6a6a" stroke-width="1.7"/><path d="M38 369L38 389L18 389Z" fill="#b9b9b9"/><path d="M850 82.5V80Q844.8 76.5 844.8 71.8Q844.8 65.8 853.5 65.8Q862.2 65.8 862.2 71.8Q862.2 76.5 857 80V82.5Z" fill="none" stroke="#fff" stroke-width="1.5"/><path d="M850.2 85.3H856.8M850.8 88.2H856.2" stroke="#fff" stroke-width="1.6"/><path d="M1025.78 817.33L1056.44 817.33L1063.56 829.78L1071.11 817.33L1104.89 817.33L1063.56 886.67L1056.89 875.82L1084.89 828.89L1077.78 828.89L1053.78 868.89Z" fill="#ea1f2b"/><path d="M1034.22 817.33L1042.22 817.33L1056.27 843.11L1054.22 847.11Z" fill="#ffffff"/><path d="M1103.7 841.6H1121Q1125.6000000000001 841.6 1125.6000000000001 844.5V855.3Q1125.6000000000001 858.1999999999999 1121 858.1999999999999H1103.7" fill="none" stroke="#ea1f2b" stroke-width="4.2" stroke-linejoin="round"/><path d="M1105.8 848V860.3" fill="none" stroke="#ea1f2b" stroke-width="4.2" stroke-linejoin="round"/><path d="M1131.8 860.3L1140.15 841.6H1145.15L1153.5 860.3" fill="none" stroke="#ea1f2b" stroke-width="4.2" stroke-linejoin="round"/><path d="M1136.8 851.5H1148" fill="none" stroke="#ea1f2b" stroke-width="3.6" stroke-linejoin="round"/><rect x="1159.8" y="841.6" width="20.39999999999991" height="16.599999999999955" rx="3.5" fill="none" stroke="#ea1f2b" stroke-width="4.2"/><path d="M1185.7 841.6H1210.3M1198.0 839.5V860.3" fill="none" stroke="#ea1f2b" stroke-width="4.2" stroke-linejoin="round"/><path d="M1209.8 860.3L1218.15 841.6H1223.15L1231.5 860.3" fill="none" stroke="#ea1f2b" stroke-width="4.2" stroke-linejoin="round"/><path d="M1214.8 851.5H1226" fill="none" stroke="#ea1f2b" stroke-width="3.6" stroke-linejoin="round"/><rect x="1237.1" y="841.6" width="21.099999999999955" height="16.599999999999955" rx="3.5" fill="none" stroke="#ea1f2b" stroke-width="4.2"/><path d="M1263.3 841.6H1288.3M1275.8 839.5V860.3" fill="none" stroke="#ea1f2b" stroke-width="4.2" stroke-linejoin="round"/><rect x="1291" y="839.5" width="4" height="3" fill="#ea1f2b"/><rect x="1291" y="845" width="4" height="15.299999999999955" fill="#ea1f2b"/><rect x="1297.7" y="839.5" width="4" height="3" fill="#ea1f2b"/><rect x="1297.7" y="845" width="4" height="15.299999999999955" fill="#ea1f2b"/><path d="M1301.7 839.5H1306.7L1326.3 860.3H1321.3Z" fill="#ea1f2b"/><rect x="1326.1" y="839.5" width="4.2" height="20.799999999999955" fill="#ea1f2b"/><rect x="1332.3" y="839.5" width="4.2" height="20.799999999999955" fill="#ea1f2b"/><rect x="1348.1" y="839.5" width="4.2" height="20.799999999999955" fill="#ea1f2b"/><rect x="1332.3" y="847.8" width="20" height="4.2" fill="#ea1f2b"/><rect x="1357.1" y="841.6" width="18.500000000000046" height="16.599999999999955" rx="3.5" fill="none" stroke="#ea1f2b" stroke-width="4.2"/><path d="M1408.3 841.6H1387Q1383.1 841.6 1383.1 844.5V855.3Q1383.1 858.1999999999999 1387 858.1999999999999H1408.3" fill="none" stroke="#ea1f2b" stroke-width="4.2" stroke-linejoin="round"/><rect x="1411.7" y="855.6" width="4.6" height="4.7" fill="#ea1f2b"/><path d="M1417.7 839.5H1422.5L1428 853L1433.5 839.5H1438.3L1430.5 860.3H1425.5Z" fill="#b81b2c"/><rect x="1441" y="839.5" width="4" height="3" fill="#b81b2c"/><rect x="1441" y="845" width="4" height="15.299999999999955" fill="#b81b2c"/><path d="M1445 839.5H1450L1462.3 860.3H1457.3Z" fill="#b81b2c"/><rect x="1462.1" y="839.5" width="4.2" height="20.799999999999955" fill="#b81b2c"/></svg>
</body></html>
